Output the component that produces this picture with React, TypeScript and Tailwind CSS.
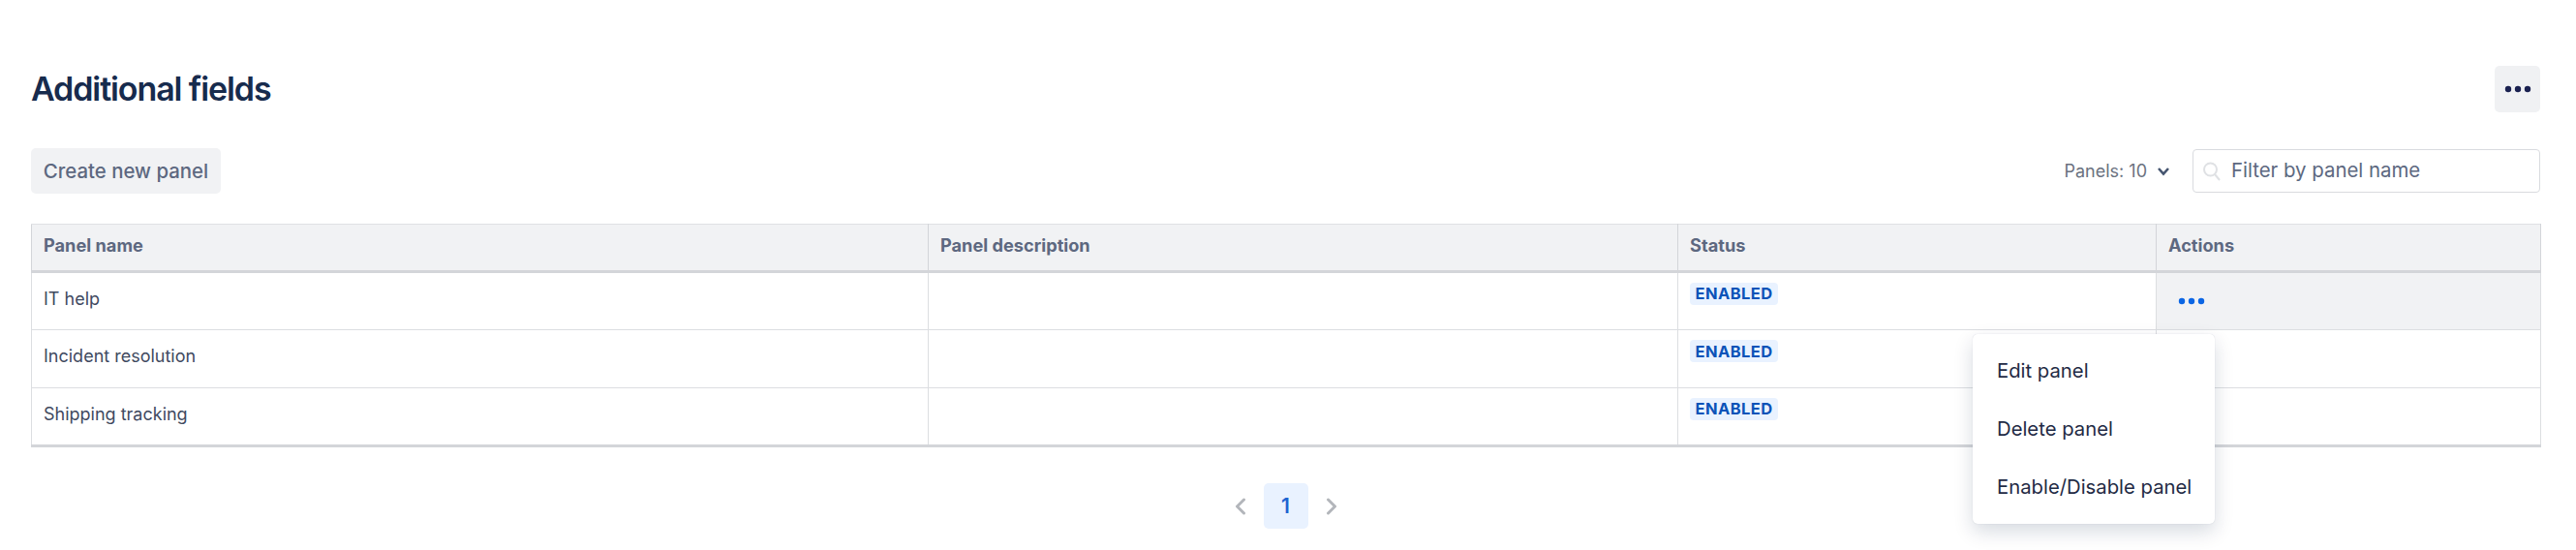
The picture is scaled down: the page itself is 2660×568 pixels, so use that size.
import React from "react";

const Dots = ({ className }: { className: string }) => (
  <svg width="28" height="8" viewBox="0 0 28 8" className={className} fill="currentColor">
    <circle cx="4" cy="4" r="3.2" />
    <circle cx="14" cy="4" r="3.2" />
    <circle cx="24" cy="4" r="3.2" />
  </svg>
);

const Chevron = ({ dir }: { dir: "l" | "r" }) => (
  <svg width="12" height="18" viewBox="0 0 12 18" fill="none" stroke="#b3b6bb" strokeWidth="3" strokeLinecap="round" strokeLinejoin="round">
    <path d={dir === "l" ? "M9.5 2 L2.5 9 L9.5 16" : "M2.5 2 L9.5 9 L2.5 16"} />
  </svg>
);

const Badge = () => (
  <span className="inline-flex h-[23px] w-[91px] items-center justify-center rounded-[4px] bg-[#e9f2ff] text-[16.5px] font-bold tracking-[0.4px] text-[#0b53b8]">
    ENABLED
  </span>
);

const rows = ["IT help", "Incident resolution", "Shipping tracking"];
const heads = ["Panel name", "Panel description", "Status", "Actions"];
const widths = ["w-[926px]", "w-[774px]", "w-[494px]", "w-[397px]"];

export default function App() {
  return (
    <div className="relative h-[568px] w-[2660px] overflow-hidden bg-white pl-8 pr-[37px] pt-[68px] font-['Inter',sans-serif]">
      <div className="flex h-12 items-center justify-between">
        <h1 className="text-[34px] font-semibold leading-[48px] tracking-[-1.1px] text-[#172b4d]">Additional fields</h1>
        <button className="flex h-12 w-[47px] items-center justify-center rounded-[5px] bg-[#f0f1f3] text-[#1a2150]">
          <Dots className="" />
        </button>
      </div>

      <div className="mt-[37px] flex h-[47px] items-center justify-between">
        <button className="h-[47px] w-[196px] rounded-[5px] bg-[#f1f2f4] pt-[1px] text-center text-[20.4px] font-medium text-[#5d6880]">
          Create new panel
        </button>
        <div className="flex items-center">
          <span className="text-[18px] text-[#6b7280]">Panels: 10</span>
          <svg width="14" height="10" viewBox="0 0 14 10" fill="none" stroke="#44546f" strokeWidth="2.6" className="ml-[10px]">
            <path d="M2 2 L7 7.5 L12 2" />
          </svg>
          <div className="ml-[23px] flex h-[45px] w-[359px] items-center rounded-[4px] border border-[#d9dbdf] bg-white pl-[9px]">
            <svg width="20" height="22" viewBox="0 0 20 22" fill="none" stroke="#dfe1e4" strokeWidth="2">
              <circle cx="8.5" cy="9" r="6.5" />
              <path d="M13 14 L18 20" />
            </svg>
            <span className="ml-[10px] text-[20.4px] text-[#5d6880]">Filter by panel name</span>
          </div>
        </div>
      </div>

      <table className="mt-[31px] w-[2591px] table-fixed border-collapse text-left">
        <thead>
          <tr className="h-[49px] bg-[#f1f2f4]">
            {heads.map((h, i) => (
              <th key={h} className={`${widths[i]} border-x border-t border-b-[3px] border-x-[#d3d5d9] border-t-[#dfe1e4] border-b-[#d3d5d9] pb-[3px] pl-3 align-middle text-[18.2px] font-bold text-[#5d6880]`}>
                {h}
              </th>
            ))}
          </tr>
        </thead>
        <tbody>
          {rows.map((r, i) => (
            <tr key={r} className={`h-[60px] ${i === 2 ? "border-b-[3px] border-b-[#d3d5d9]" : "border-b border-b-[#dcdee1]"}`}>
              <td className="border-x border-[#dcdee1] pb-[6px] pl-3 align-middle text-[18px] text-[#3f4a5f]">{r}</td>
              <td className="border-x border-[#dcdee1]" />
              <td className="border-x border-[#dcdee1] pb-[16px] pl-3 align-middle">
                <Badge />
              </td>
              <td className={`border-x border-[#dcdee1] pl-[22px] align-middle ${i === 0 ? "bg-[#f1f2f4]" : ""}`}>
                {i === 0 && <Dots className="text-[#0c66e4]" />}
              </td>
            </tr>
          ))}
        </tbody>
      </table>

      <div className="mt-[37px] flex items-center justify-center">
        <Chevron dir="l" />
        <span className="mx-[18px] flex h-[47px] w-[46px] items-center justify-center rounded-[5px] bg-[#e9f2ff] text-[21px] font-semibold text-[#1d63d1]">
          1
        </span>
        <Chevron dir="r" />
      </div>

      <div className="absolute left-[2037px] top-[345px] flex h-[196px] w-[250px] flex-col justify-center rounded-[5px] bg-white pl-[25px] text-[20.3px] text-[#1f2a44] shadow-[0_8px_20px_rgba(9,30,66,0.16),0_0_1px_rgba(9,30,66,0.2)]">
        <div className="flex h-[60px] items-center">Edit panel</div>
        <div className="flex h-[60px] items-center">Delete panel</div>
        <div className="flex h-[60px] items-center">Enable/Disable panel</div>
      </div>
    </div>
  );
}
